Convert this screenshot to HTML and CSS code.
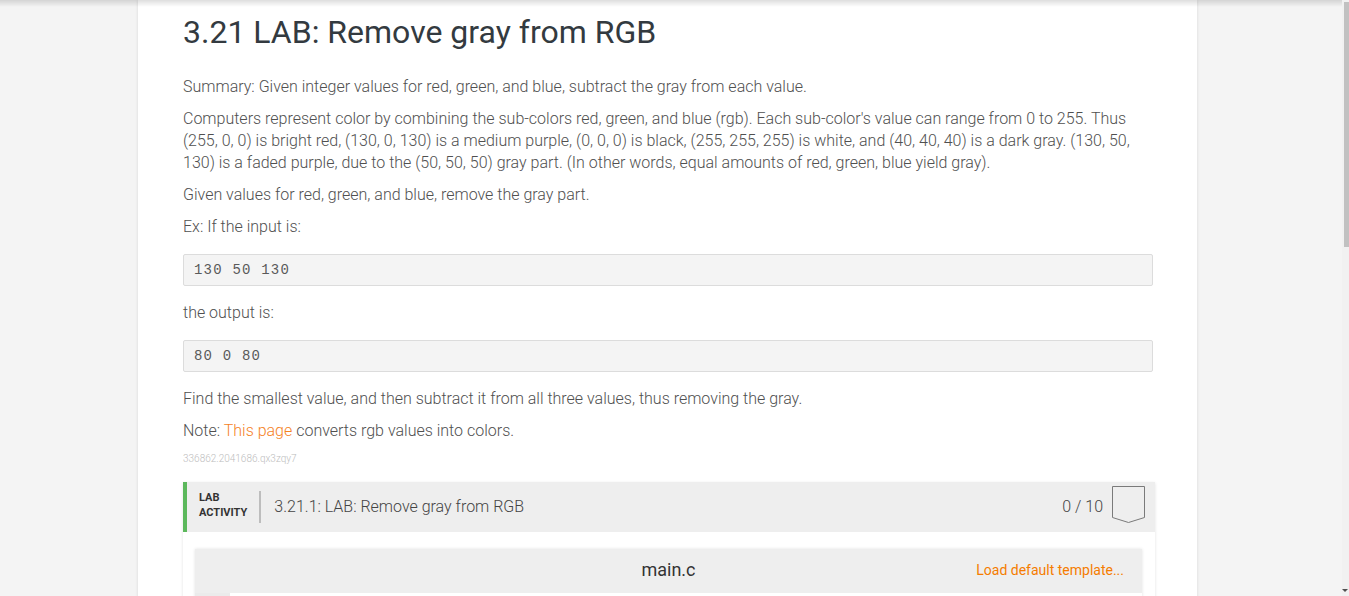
FILE: index.html
```html
<!DOCTYPE html>
<html lang="en">
<head>
<meta charset="utf-8">
<title>3.21 LAB: Remove gray from RGB</title>
<link rel="stylesheet" href="styles.css">
</head>
<body>
<div class="page">
  <main class="card">
    <h1 class="title">3.21 LAB: Remove gray from RGB</h1>
    <p>Summary: Given integer values for red, green, and blue, subtract the gray from each value.</p>
    <p>Computers represent color by combining the sub-colors red, green, and blue (rgb). Each sub-color's value can range from 0 to 255. Thus (255, 0, 0) is bright red, (130, 0, 130) is a medium purple, (0, 0, 0) is black, (255, 255, 255) is white, and (40, 40, 40) is a dark gray. (130, 50, 130) is a faded purple, due to the (50, 50, 50) gray part. (In other words, equal amounts of red, green, blue yield gray).</p>
    <p>Given values for red, green, and blue, remove the gray part.</p>
    <p>Ex: If the input is:</p>
    <pre class="code">130 50 130</pre>
    <p>the output is:</p>
    <pre class="code">80 0 80</pre>
    <p>Find the smallest value, and then subtract it from all three values, thus removing the gray.</p>
    <p>Note: <a class="link" href="#">This page</a> converts rgb values into colors.</p>
    <div class="ident">336862.2041686.qx3zqy7</div>

    <section class="lab">
      <div class="lab-bar">
        <div class="lab-label">LAB<br>ACTIVITY</div>
        <div class="lab-divider"></div>
        <div class="lab-title">3.21.1: LAB: Remove gray from RGB</div>
        <div class="lab-score">0 / 10</div>
        <svg class="badge" width="33" height="38" viewBox="0 0 33 38">
          <path d="M0.5 0.5 H32.5 V31.5 L16.5 36.5 L0.5 31.5 Z" fill="none" stroke="#7a7a7a" stroke-width="1"/>
        </svg>
      </div>
      <div class="lab-body">
        <div class="editor">
          <div class="editor-head">
            <span class="spacer"></span>
            <span class="filename">main.c</span>
            <span class="spacer right"><a class="template" href="#">Load default template...</a></span>
          </div>
          <div class="editor-body">
            <div class="gutter"></div>
            <div class="lines"></div>
          </div>
        </div>
      </div>
    </section>
  </main>
</div>
<div class="top-shadow"></div>
<div class="scrollbar">
  <div class="thumb"></div>
  <div class="arrow"></div>
</div>
</body>
</html>
```

FILE: styles.css
```css
html, body {
  margin: 0;
  padding: 0;
  height: 100%;
  overflow: hidden;
}
body {
  background: #f4f4f4;
  font-family: Roboto, "Liberation Sans", Arial, sans-serif;
  color: #555;
}
.page {
  padding-left: 138px;
  padding-right: 152px;
}
.card {
  width: 1059px;
  box-sizing: border-box;
  background: #fff;
  padding: 12px 44px 40px 45px;
  box-shadow: 0 0 3px rgba(0, 0, 0, 0.12);
  min-height: 700px;
}
.title {
  margin: 0 0 24px;
  font-size: 32px;
  line-height: 40px;
  font-weight: 400;
  color: #333a40;
}
p {
  margin: 0 0 10px;
  font-size: 16px;
  line-height: 22px;
  font-weight: 300;
  color: #505050;
}
.code {
  margin: 16px 0 16px;
  height: 30px;
  line-height: 30px;
  padding: 0 10px;
  background: #f4f4f4;
  border: 1px solid #dcdcdc;
  border-radius: 2px;
  font-family: "Liberation Mono", "Courier New", monospace;
  font-size: 14px;
  letter-spacing: 1.2px;
  color: #5a5a5a;
}
.code + p {
  margin-top: 0;
}
.link {
  color: #f5821f;
  text-decoration: none;
}
.ident {
  margin-top: 10px;
  font-size: 10px;
  line-height: 14px;
  color: #bdbdbd;
  font-weight: 300;
}
.lab {
  margin-top: 16px;
  margin-right: -2px;
  box-shadow: 0 1px 3px rgba(0, 0, 0, 0.12);
}
.lab-bar {
  height: 50px;
  box-sizing: border-box;
  display: flex;
  align-items: center;
  background: #eeeeee;
  border-left: 4px solid #5cb85c;
  padding: 0 10px 2px 12px;
}
.lab-label {
  font-size: 11px;
  line-height: 15px;
  font-weight: 700;
  color: #333;
  margin-top: -2px;
}
.lab-divider {
  width: 2px;
  height: 32px;
  background: #bdbdbd;
  margin: 2px 12px 0 12px;
}
.lab-title {
  flex: 1;
  font-size: 16px;
  font-weight: 300;
  color: #444;
  padding-left: 1px;
}
.lab-score {
  font-size: 16px;
  font-weight: 300;
  color: #444;
  margin-right: 9px;
}
.badge {
  display: block;
  align-self: flex-start;
  margin-top: 4px;
}
.lab-body {
  background: #fff;
  padding: 17px 13px 40px 12px;
}
.editor {
  box-shadow: 0 0 3px rgba(0, 0, 0, 0.12);
}
.editor-head {
  height: 44px;
  box-sizing: border-box;
  display: flex;
  align-items: center;
  background: #eeeeee;
  padding: 0 18px 3px;
}
.spacer {
  flex: 1;
}
.spacer.right {
  text-align: right;
}
.filename {
  font-size: 18px;
  color: #333;
}
.template {
  font-size: 14px;
  color: #f57c00;
  text-decoration: none;
}
.editor-body {
  display: flex;
  height: 200px;
}
.gutter {
  width: 35px;
  background: #ebebeb;
}
.lines {
  flex: 1;
  background: #fff;
}
.top-shadow {
  position: fixed;
  left: 0;
  right: 0;
  top: 0;
  height: 7px;
  background: linear-gradient(to bottom, rgba(0, 0, 0, 0.13), rgba(0, 0, 0, 0));
  pointer-events: none;
}
.scrollbar {
  position: fixed;
  top: 0;
  right: 0;
  width: 7px;
  height: 100%;
  background: #f1f1f1;
}
.thumb {
  position: absolute;
  top: 2px;
  right: 0;
  width: 5px;
  height: 245px;
  background: #c1c1c1;
}
.arrow {
  position: absolute;
  bottom: 4px;
  right: 1px;
  width: 0;
  height: 0;
  border-left: 3px solid transparent;
  border-right: 3px solid transparent;
  border-top: 3px solid #505050;
}
```
